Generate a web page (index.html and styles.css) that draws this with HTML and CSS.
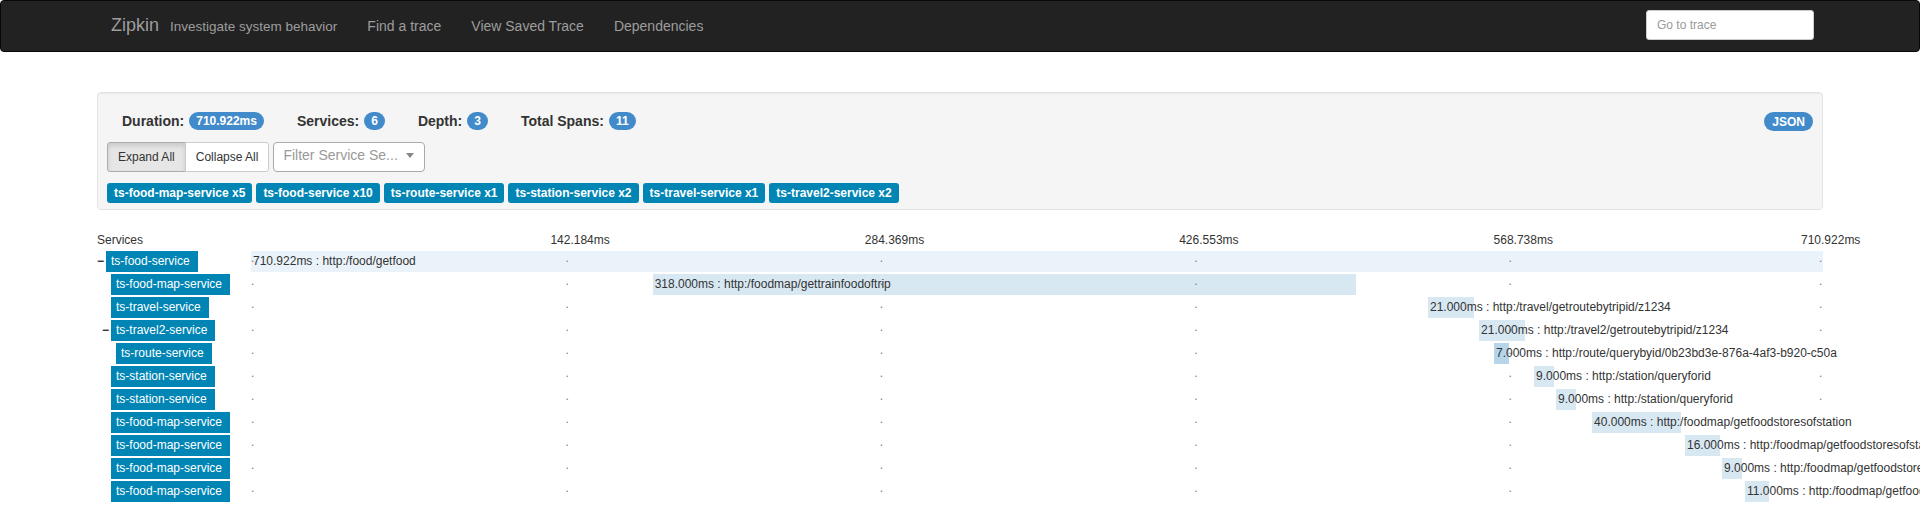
FILE: index.html
```html
<!DOCTYPE html>
<html lang="en">
<head>
<meta charset="utf-8">
<title>Zipkin</title>
<link rel="stylesheet" href="styles.css">
</head>
<body>
<nav class="navbar">
  <div class="nav-inner">
    <a class="brand"><span class="brand-name">Zipkin</span><span class="tagline">Investigate system behavior</span></a>
    <ul class="nav-links">
      <li><a>Find a trace</a></li>
      <li><a>View Saved Trace</a></li>
      <li><a>Dependencies</a></li>
    </ul>
    <input class="goto" type="text" placeholder="Go to trace">
  </div>
</nav>

<main class="main">
  <section class="well">
    <div class="stats">
      <div class="stat"><span class="stat-label">Duration:</span><span class="badge">710.922ms</span></div>
      <div class="stat"><span class="stat-label">Services:</span><span class="badge">6</span></div>
      <div class="stat"><span class="stat-label">Depth:</span><span class="badge">3</span></div>
      <div class="stat"><span class="stat-label">Total Spans:</span><span class="badge">11</span></div>
      <span class="badge json">JSON</span>
    </div>
    <div class="controls">
      <div class="btn-group">
        <button class="btn active">Expand All</button>
        <button class="btn">Collapse All</button>
      </div>
      <div class="filter"><span class="filter-text">Filter Service Se...</span><span class="caret"></span></div>
    </div>
    <div class="service-tags">
      <span class="svc-tag">ts-food-map-service x5</span>
      <span class="svc-tag">ts-food-service x10</span>
      <span class="svc-tag">ts-route-service x1</span>
      <span class="svc-tag">ts-station-service x2</span>
      <span class="svc-tag">ts-travel-service x1</span>
      <span class="svc-tag">ts-travel2-service x2</span>
    </div>
  </section>

  <section class="trace">
    <div class="trace-header">
      <div class="handle">Services</div>
      <div class="timeline">
        <span class="tick-label" style="left: calc(20% - 15px)">142.184ms</span>
        <span class="tick-label" style="left: calc(40% - 15px)">284.369ms</span>
        <span class="tick-label" style="left: calc(60% - 15px)">426.553ms</span>
        <span class="tick-label" style="left: calc(80% - 15px)">568.738ms</span>
        <span class="tick-label" style="left: calc(100% - 22px)">710.922ms</span>
      </div>
    </div>

    <div class="span-row">
      <div class="handle" style="padding-left: 0px"><span class="expander">−</span><span class="svc-name">ts-food-service</span></div>
      <div class="timeline">
        <div class="bar root" style="left: 0%; width: 100%"></div>
        <span class="dot" style="left: 0%">.</span><span class="dot" style="left: 20%">.</span><span class="dot" style="left: 40%">.</span><span class="dot" style="left: 60%">.</span><span class="dot" style="left: 80%">.</span><span class="dot" style="left: calc(100% - 4px)">.</span>
        <span class="span-text" style="left: 0%">710.922ms : http:/food/getfood</span>
      </div>
    </div>

    <div class="span-row">
      <div class="handle" style="padding-left: 5px"><span class="expander"></span><span class="svc-name">ts-food-map-service</span></div>
      <div class="timeline">
        <div class="bar" style="left: 25.55%; width: 44.73%"></div>
        <span class="dot" style="left: 0%">.</span><span class="dot" style="left: 20%">.</span><span class="dot" style="left: 40%">.</span><span class="dot" style="left: 60%">.</span><span class="dot" style="left: 80%">.</span><span class="dot" style="left: calc(100% - 4px)">.</span>
        <span class="span-text" style="left: 25.55%">318.000ms : http:/foodmap/gettrainfoodoftrip</span>
      </div>
    </div>

    <div class="span-row">
      <div class="handle" style="padding-left: 5px"><span class="expander"></span><span class="svc-name">ts-travel-service</span></div>
      <div class="timeline">
        <div class="bar" style="left: 74.87%; width: 2.954%"></div>
        <span class="dot" style="left: 0%">.</span><span class="dot" style="left: 20%">.</span><span class="dot" style="left: 40%">.</span><span class="dot" style="left: 60%">.</span><span class="dot" style="left: 80%">.</span><span class="dot" style="left: calc(100% - 4px)">.</span>
        <span class="span-text" style="left: 74.87%">21.000ms : http:/travel/getroutebytripid/z1234</span>
      </div>
    </div>

    <div class="span-row">
      <div class="handle" style="padding-left: 5px"><span class="expander">−</span><span class="svc-name">ts-travel2-service</span></div>
      <div class="timeline">
        <div class="bar" style="left: 78.12%; width: 2.954%"></div>
        <span class="dot" style="left: 0%">.</span><span class="dot" style="left: 20%">.</span><span class="dot" style="left: 40%">.</span><span class="dot" style="left: 60%">.</span><span class="dot" style="left: 80%">.</span><span class="dot" style="left: calc(100% - 4px)">.</span>
        <span class="span-text" style="left: 78.12%">21.000ms : http:/travel2/getroutebytripid/z1234</span>
      </div>
    </div>

    <div class="span-row">
      <div class="handle" style="padding-left: 10px"><span class="expander"></span><span class="svc-name">ts-route-service</span></div>
      <div class="timeline">
        <div class="bar dark" style="left: 79.07%; width: 0.985%"></div>
        <span class="dot" style="left: 0%">.</span><span class="dot" style="left: 20%">.</span><span class="dot" style="left: 40%">.</span><span class="dot" style="left: 60%">.</span><span class="dot" style="left: 80%">.</span>
        <span class="span-text" style="left: 79.07%">7.000ms : http:/route/querybyid/0b23bd3e-876a-4af3-b920-c50a</span>
      </div>
    </div>

    <div class="span-row">
      <div class="handle" style="padding-left: 5px"><span class="expander"></span><span class="svc-name">ts-station-service</span></div>
      <div class="timeline">
        <div class="bar" style="left: 81.62%; width: 1.266%"></div>
        <span class="dot" style="left: 0%">.</span><span class="dot" style="left: 20%">.</span><span class="dot" style="left: 40%">.</span><span class="dot" style="left: 60%">.</span><span class="dot" style="left: 80%">.</span><span class="dot" style="left: calc(100% - 4px)">.</span>
        <span class="span-text" style="left: 81.62%">9.000ms : http:/station/queryforid</span>
      </div>
    </div>

    <div class="span-row">
      <div class="handle" style="padding-left: 5px"><span class="expander"></span><span class="svc-name">ts-station-service</span></div>
      <div class="timeline">
        <div class="bar" style="left: 83.02%; width: 1.266%"></div>
        <span class="dot" style="left: 0%">.</span><span class="dot" style="left: 20%">.</span><span class="dot" style="left: 40%">.</span><span class="dot" style="left: 60%">.</span><span class="dot" style="left: 80%">.</span><span class="dot" style="left: calc(100% - 4px)">.</span>
        <span class="span-text" style="left: 83.02%">9.000ms : http:/station/queryforid</span>
      </div>
    </div>

    <div class="span-row">
      <div class="handle" style="padding-left: 5px"><span class="expander"></span><span class="svc-name">ts-food-map-service</span></div>
      <div class="timeline">
        <div class="bar" style="left: 85.31%; width: 5.627%"></div>
        <span class="dot" style="left: 0%">.</span><span class="dot" style="left: 20%">.</span><span class="dot" style="left: 40%">.</span><span class="dot" style="left: 60%">.</span><span class="dot" style="left: 80%">.</span>
        <span class="span-text" style="left: 85.31%">40.000ms : http:/foodmap/getfoodstoresofstation</span>
      </div>
    </div>

    <div class="span-row">
      <div class="handle" style="padding-left: 5px"><span class="expander"></span><span class="svc-name">ts-food-map-service</span></div>
      <div class="timeline">
        <div class="bar" style="left: 91.22%; width: 2.251%"></div>
        <span class="dot" style="left: 0%">.</span><span class="dot" style="left: 20%">.</span><span class="dot" style="left: 40%">.</span><span class="dot" style="left: 60%">.</span><span class="dot" style="left: 80%">.</span>
        <span class="span-text" style="left: 91.22%">16.000ms : http:/foodmap/getfoodstoresofstation</span>
      </div>
    </div>

    <div class="span-row">
      <div class="handle" style="padding-left: 5px"><span class="expander"></span><span class="svc-name">ts-food-map-service</span></div>
      <div class="timeline">
        <div class="bar" style="left: 93.58%; width: 1.266%"></div>
        <span class="dot" style="left: 0%">.</span><span class="dot" style="left: 20%">.</span><span class="dot" style="left: 40%">.</span><span class="dot" style="left: 60%">.</span><span class="dot" style="left: 80%">.</span>
        <span class="span-text" style="left: 93.58%">9.000ms : http:/foodmap/getfoodstoresofstation</span>
      </div>
    </div>

    <div class="span-row">
      <div class="handle" style="padding-left: 5px"><span class="expander"></span><span class="svc-name">ts-food-map-service</span></div>
      <div class="timeline">
        <div class="bar" style="left: 95.04%; width: 1.547%"></div>
        <span class="dot" style="left: 0%">.</span><span class="dot" style="left: 20%">.</span><span class="dot" style="left: 40%">.</span><span class="dot" style="left: 60%">.</span><span class="dot" style="left: 80%">.</span>
        <span class="span-text" style="left: 95.04%">11.000ms : http:/foodmap/getfoodstoresofstation</span>
      </div>
    </div>
  </section>
</main>
</body>
</html>
```
FILE: styles.css
```css
html, body {
  overflow-x: hidden;
}
body {
  margin: 0;
  font-family: "Liberation Sans", Arial, Helvetica, sans-serif;
  font-size: 14px;
  line-height: 20px;
  color: #333;
  background: #fff;
}

/* ---------- navbar ---------- */
.navbar {
  background: #222;
  border: 1px solid #080808;
  border-radius: 4px;
  height: 50px;
}
.nav-inner {
  display: flex;
  align-items: center;
  height: 50px;
  padding: 0 105px 0 110px;
}
.brand {
  display: flex;
  align-items: baseline;
  padding-right: 15px;
  color: #9d9d9d;
}
.brand-name {
  font-size: 18px;
}
.tagline {
  font-size: 13.5px;
  margin-left: 11px;
}
.nav-links {
  display: flex;
  list-style: none;
  margin: 0;
  padding: 0;
}
.nav-links a {
  display: block;
  padding: 15px;
  color: #9d9d9d;
}
.goto {
  margin-left: auto;
  margin-top: -2px;
  width: 168px;
  height: 30px;
  box-sizing: border-box;
  padding: 5px 10px;
  border: 1px solid #ccc;
  border-radius: 3px;
  background: #fff;
  font-family: inherit;
  font-size: 12px;
  color: #555;
  outline: none;
}
.goto::placeholder {
  color: #999;
}

/* ---------- main ---------- */
.main {
  margin: 40px 97px 0;
}
.well {
  background: #f5f5f5;
  border: 1px solid #e3e3e3;
  border-radius: 4px;
  box-shadow: inset 0 1px 1px rgba(0, 0, 0, .05);
  padding: 18px 9px 6px;
  margin-bottom: 20px;
}
.stats {
  display: flex;
  align-items: center;
  gap: 33px;
  height: 20px;
  padding-left: 15px;
}
.stat {
  display: flex;
  align-items: center;
}
.stat-label {
  font-weight: bold;
  font-size: 14px;
}
.badge {
  display: inline-block;
  margin-left: 5px;
  padding: 3px 7px;
  font-size: 12px;
  font-weight: bold;
  line-height: 12px;
  color: #fff;
  background: #428bca;
  border-radius: 10px;
  white-space: nowrap;
}
.badge.json {
  margin-left: auto;
  padding: 4px 8px 3px;
}

.controls {
  display: flex;
  margin-top: 11px;
}
.btn-group {
  display: flex;
}
.btn {
  font-family: inherit;
  font-size: 12px;
  line-height: 18px;
  padding: 5px 10px;
  height: 30px;
  color: #333;
  background: #fff;
  border: 1px solid #ccc;
  margin: 0;
}
.btn:first-child {
  border-radius: 3px 0 0 3px;
}
.btn + .btn {
  margin-left: -1px;
  border-radius: 0 3px 3px 0;
}
.btn.active {
  background: #e6e6e6;
  border-color: #adadad;
  box-shadow: inset 0 3px 5px rgba(0, 0, 0, .125);
}
.filter {
  display: flex;
  align-items: flex-start;
  margin-left: 4px;
  width: 152px;
  height: 30px;
  box-sizing: border-box;
  padding: 2px 0 0 9px;
  background: #fff;
  border: 1px solid #aaa;
  border-radius: 4px;
  font-size: 14px;
  line-height: 20px;
  color: #999;
}
.filter-text {
  flex: 1;
  white-space: nowrap;
}
.caret {
  width: 0;
  height: 0;
  margin: 8px 10px 0 0;
  border-left: 4px solid transparent;
  border-right: 4px solid transparent;
  border-top: 5px solid #888;
}

.service-tags {
  display: flex;
  gap: 4px;
  margin-top: 11px;
}
.svc-tag {
  display: inline-block;
  height: 20px;
  line-height: 20px;
  padding: 0 7px;
  font-size: 12px;
  font-weight: bold;
  color: #fff;
  background: #0085b5;
  border-radius: 3px;
  white-space: nowrap;
}

/* ---------- trace ---------- */
.trace {
  font-size: 12px;
}
.trace-header {
  display: flex;
  height: 20px;
  line-height: 20px;
  margin-bottom: 1px;
}
.handle {
  flex: 0 0 154px;
  box-sizing: border-box;
  display: flex;
  align-items: center;
}
.timeline {
  position: relative;
  flex: 1;
}
.tick-label {
  position: absolute;
  top: 0;
  white-space: nowrap;
}
.span-row {
  display: flex;
  height: 21px;
  line-height: 21px;
  margin-bottom: 2px;
}
.expander {
  flex: 0 0 9px;
  font-weight: bold;
  font-size: 12px;
  color: #333;
}
.svc-name {
  height: 21px;
  padding: 0 8px 0 5px;
  color: #fff;
  background: #0085b5;
  white-space: nowrap;
}
.bar {
  position: absolute;
  top: 0;
  height: 21px;
  background: #d8e8f3;
}
.bar.root {
  background: #ebf3fa;
}
.bar.dark {
  background: #b6d4ea;
}
.dot {
  position: absolute;
  top: 1px;
  line-height: 12px;
  font-size: 12px;
  color: #777;
}
.span-text {
  position: absolute;
  top: 0;
  margin-left: 2px;
  white-space: nowrap;
  color: #333;
}
```
